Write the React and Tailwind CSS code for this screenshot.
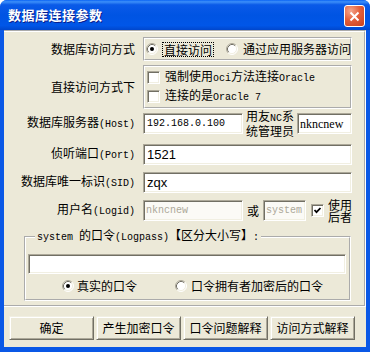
import React from 'react'

const sunken =
  'border border-t-[#aca899] border-l-[#aca899] border-r-white border-b-white shadow-[inset_1px_1px_0_#716f64,inset_-1px_-1px_0_#f1efe2]'
const raised =
  'border border-t-[#f1efe2] border-l-[#f1efe2] border-r-[#716f64] border-b-[#716f64] shadow-[inset_1px_1px_0_#ffffff,inset_-1px_-1px_0_#aca899]'
const etched = 'border-2 [border-style:groove] border-white'

// SimSun-like half width latin: 6px per char
const A = ({ children }) => (
  <span className="font-['Liberation_Mono',monospace] text-[10px]">{children}</span>
)

const Radio = ({ on }) => (
  <svg width="12" height="12" viewBox="0 0 12 12" className="shrink-0">
    <circle cx="6" cy="6" r="5" fill="#fff" />
    <path d="M2.11 9.89 A5.5 5.5 0 0 1 9.89 2.11" stroke="#aca899" fill="none" />
    <path d="M9.89 2.11 A5.5 5.5 0 0 1 2.11 9.89" stroke="#ffffff" fill="none" />
    <path d="M2.82 9.18 A4.5 4.5 0 0 1 9.18 2.82" stroke="#716f64" fill="none" />
    <path d="M9.18 2.82 A4.5 4.5 0 0 1 2.82 9.18" stroke="#f1efe2" fill="none" />
    {on && <circle cx="6" cy="6" r="2" fill="#000" />}
  </svg>
)

const Check = ({ on }) => (
  <div className={`w-[13px] h-[13px] shrink-0 bg-white flex items-center justify-center ${sunken}`}>
    {on && (
      <svg width="9" height="9" viewBox="0 0 9 9">
        <polyline points="1.5,4 3.5,6.2 7.5,2" stroke="#000" strokeWidth="1.8" fill="none" />
      </svg>
    )}
  </div>
)

const Label = ({ children }) => (
  <div className="w-[131px] shrink-0 text-right leading-[14px] whitespace-nowrap">{children}</div>
)

const Button = ({ children }) => (
  <button className={`w-[85px] h-[24px] bg-[#ece9d8] flex items-center justify-center whitespace-nowrap ${raised}`}>
    {children}
  </button>
)

export default function App() {
  return (
    <div className="w-[370px] h-[352px] bg-white">
      <div className="w-full h-full flex flex-col rounded-t-[7px] overflow-hidden bg-[#0a58e6] text-[12px] text-black font-['Noto_Sans_CJK_SC',sans-serif]">
        <div className="h-[30px] shrink-0 flex items-start pl-[8px] pr-[5px] bg-[linear-gradient(to_bottom,#0b64f4_0%,#3c8ff9_6%,#0a5ae8_16%,#0054e3_50%,#0056e8_85%,#0046cc_100%)]">
          <span className="mt-[7px] text-white font-bold text-[13px] leading-[16px] tracking-[0.5px] [text-shadow:1px_1px_0_#0a1e8c]">
            数据库连接参数
          </span>
          <div className="ml-auto mt-[5px] w-[21px] h-[22px] rounded-[3px] border border-white bg-[radial-gradient(circle_at_30%_25%,#f4a78e_0%,#e4603c_45%,#c9401c_100%)] flex items-center justify-center">
            <svg width="11" height="11" viewBox="0 0 11 11">
              <path d="M1.5 1.5 L9.5 9.5 M9.5 1.5 L1.5 9.5" stroke="#fff" strokeWidth="2" />
            </svg>
          </div>
        </div>

        <div className="flex-1 mx-[4px] mb-[5px] bg-[#ece9d8] flex flex-col">
          <div className="h-[277px] shrink-0 border-t-2 border-r-2 border-b-2 border-l-0 [border-style:groove] border-white pt-[5px]">
            {/* access mode */}
            <div className="flex items-center h-[24px]">
              <Label>数据库访问方式</Label>
              <div className={`ml-[8px] w-[209px] h-[24px] flex items-center pl-[1px] whitespace-nowrap ${etched}`}>
                <Radio on />
                <span className="ml-[4px] shrink-0 px-[1px] border border-dotted border-black leading-[13px]">直接访问</span>
                <span className="ml-[12px] shrink-0">
                  <Radio />
                </span>
                <span className="ml-[5px] shrink-0 leading-[14px]">通过应用服务器访问</span>
              </div>
            </div>

            {/* direct options */}
            <div className="flex items-center h-[44px] mt-[4px]">
              <Label>直接访问方式下</Label>
              <div className={`ml-[8px] w-[209px] h-[44px] flex flex-col pt-[2px] gap-[3px] pl-[2px] whitespace-nowrap ${etched}`}>
                <div className="h-[16px] flex items-center gap-[5px] leading-[14px]">
                  <Check />
                  <span>
                    强制使用<A>oci</A>方法连接<A>Oracle</A>
                  </span>
                </div>
                <div className="h-[16px] flex items-center gap-[5px] leading-[14px]">
                  <Check />
                  <span>
                    连接的是<A>Oracle 7</A>
                  </span>
                </div>
              </div>
            </div>

            {/* host */}
            <div className="flex items-center h-[21px] mt-[4px]">
              <Label>
                数据库服务器<A>(Host)</A>
              </Label>
              <div className="ml-[8px] w-[209px] flex items-center">
                <div className={`w-[100px] h-[21px] bg-white flex items-center pl-[3px] ${sunken}`}>
                  <A>192.168.0.100</A>
                </div>
                <div className="ml-[3px] w-[48px] leading-[12px] whitespace-nowrap">
                  <div>
                    用友<A>NC</A>系
                  </div>
                  <div>统管理员</div>
                </div>
                <div className={`ml-[3px] w-[55px] h-[21px] bg-white flex items-center pl-[2px] ${sunken}`}>
                  <span className="font-['Liberation_Serif',serif] text-[12px]">nkncnew</span>
                </div>
              </div>
            </div>

            {/* port */}
            <div className="flex items-center h-[21px] mt-[10px]">
              <Label>
                侦听端口<A>(Port)</A>
              </Label>
              <div className={`ml-[8px] w-[209px] h-[21px] bg-white flex items-center pl-[3px] ${sunken}`}>
                <span className="font-['Liberation_Sans',sans-serif] text-[13px]">1521</span>
              </div>
            </div>

            {/* sid */}
            <div className="flex items-center h-[21px] mt-[7px]">
              <Label>
                数据库唯一标识<A>(SID)</A>
              </Label>
              <div className={`ml-[8px] w-[209px] h-[21px] bg-white flex items-center pl-[3px] ${sunken}`}>
                <span className="font-['Liberation_Sans',sans-serif] text-[13px]">zqx</span>
              </div>
            </div>

            {/* logid */}
            <div className="flex items-center h-[21px] mt-[7px]">
              <Label>
                用户名<A>(Logid)</A>
              </Label>
              <div className="ml-[8px] w-[209px] flex items-center">
                <div className={`w-[100px] h-[21px] bg-[#fbfaf6] flex items-center pl-[2px] text-[#aca899] ${sunken}`}>
                  <A>nkncnew</A>
                </div>
                <span className="ml-[4px] w-[12px] leading-[14px]">或</span>
                <div className={`ml-[4px] w-[43px] h-[21px] bg-[#fbfaf6] flex items-center pl-[2px] text-[#aca899] ${sunken}`}>
                  <A>system</A>
                </div>
                <div className="ml-[5px]">
                  <Check on />
                </div>
                <div className="ml-[4px] w-[24px] leading-[12px]">
                  <div>使用</div>
                  <div>后者</div>
                </div>
              </div>
            </div>

            {/* password */}
            <fieldset className={`mt-[7px] ml-[20px] w-[327px] pl-[2px] pr-[3px] pb-[5px] ${etched}`}>
              <legend className="ml-[7px] px-[2px] leading-[14px] whitespace-nowrap">
                <A>system </A>的口令<A>(Logpass)</A>【区分大小写】<A>:</A>
              </legend>
              <div className={`mt-[9px] h-[20px] bg-white ${sunken}`} />
              <div className="mt-[4px] h-[16px] flex items-center pl-[34px] leading-[14px] whitespace-nowrap">
                <Radio on />
                <span className="ml-[3px]">真实的口令</span>
                <span className="ml-[38px]">
                  <Radio />
                </span>
                <span className="ml-[4px]">口令拥有者加密后的口令</span>
              </div>
            </fieldset>
          </div>

          <div className="mt-[9px] flex pl-[5px] gap-[2px] leading-[14px]">
            <Button>确定</Button>
            <Button>产生加密口令</Button>
            <Button>口令问题解释</Button>
            <Button>访问方式解释</Button>
          </div>
        </div>
      </div>
    </div>
  )
}
